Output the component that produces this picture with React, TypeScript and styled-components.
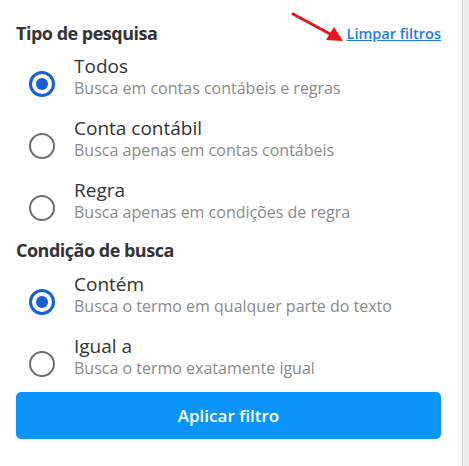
import React, { useState } from "react"
import styled, { createGlobalStyle } from "styled-components"

const GlobalStyle = createGlobalStyle`
  html, body {
    margin: 0;
    padding: 0;
    background: #ffffff;
  }
  body {
    font-family: 'Open Sans', 'Noto Sans', sans-serif;
  }
`

const Page = styled.div`
  display: flex;
  flex-direction: row;
  width: 469px;
  height: 466px;
  overflow: hidden;
  position: relative;
`

const Panel = styled.div`
  flex: 1;
  display: flex;
  flex-direction: column;
  padding: 21px 21px 0 16px;
`

const ScrollTrack = styled.div`
  width: 6px;
  background: #ececec;
  border-left: 1px solid #dcdcdc;
`

const HeaderRow = styled.div`
  display: flex;
  flex-direction: row;
  align-items: center;
  justify-content: space-between;
`

const Heading = styled.h2<{ $spaced?: boolean }>`
  margin: ${(p) => (p.$spaced ? "7px 0 1px 0" : "0")};
  font-size: 18px;
  line-height: 24px;
  font-weight: 700;
  color: #333333;
  letter-spacing: -0.5px;
`

const ClearLink = styled.a`
  font-size: 14.5px;
  font-weight: 600;
  color: #1a7cf0;
  text-decoration: underline;
  cursor: pointer;
`

const Option = styled.label`
  display: flex;
  flex-direction: row;
  align-items: flex-start;
  gap: 19px;
  padding: 9px 0 8px 13px;
  cursor: pointer;
`

const Circle = styled.span<{ $checked: boolean }>`
  box-sizing: border-box;
  flex: none;
  width: 26px;
  height: 26px;
  margin-top: 17px;
  border-radius: 50%;
  border: ${(p) => (p.$checked ? "3px solid #1560d4" : "2px solid #6e6e6e")};
  display: flex;
  align-items: center;
  justify-content: center;

  &::after {
    content: "";
    display: ${(p) => (p.$checked ? "block" : "none")};
    width: 12px;
    height: 12px;
    border-radius: 50%;
    background: #1560d4;
  }
`

const OptionText = styled.span`
  display: flex;
  flex-direction: column;
`

const OptionTitle = styled.span`
  font-size: 19px;
  line-height: 24px;
  color: #333333;
`

const OptionDesc = styled.span`
  font-size: 16px;
  line-height: 21px;
  color: #8a8a8a;
`

const ApplyButton = styled.button`
  margin-top: 5px;
  height: 47px;
  width: 100%;
  border: none;
  border-radius: 5px;
  background: #0b95fb;
  color: #ffffff;
  font-family: inherit;
  font-size: 17px;
  font-weight: 600;
  cursor: pointer;
`

const Arrow = styled.svg`
  position: absolute;
  left: 288px;
  top: 8px;
  pointer-events: none;
`

type Opt = { value: string; title: string; desc: string }

const tipos: Opt[] = [
  { value: "todos", title: "Todos", desc: "Busca em contas contábeis e regras" },
  { value: "conta", title: "Conta contábil", desc: "Busca apenas em contas contábeis" },
  { value: "regra", title: "Regra", desc: "Busca apenas em condições de regra" },
]

const condicoes: Opt[] = [
  { value: "contem", title: "Contém", desc: "Busca o termo em qualquer parte do texto" },
  { value: "igual", title: "Igual a", desc: "Busca o termo exatamente igual" },
]

const RadioGroup: React.FC<{ options: Opt[]; value: string; onChange: (v: string) => void }> = ({
  options,
  value,
  onChange,
}) => (
  <>
    {options.map((o) => (
      <Option key={o.value} onClick={() => onChange(o.value)}>
        <Circle $checked={value === o.value} />
        <OptionText>
          <OptionTitle>{o.title}</OptionTitle>
          <OptionDesc>{o.desc}</OptionDesc>
        </OptionText>
      </Option>
    ))}
  </>
)

export default function App() {
  const [tipo, setTipo] = useState("todos")
  const [cond, setCond] = useState("contem")

  return (
    <Page>
      <GlobalStyle />
      <Panel>
        <HeaderRow>
          <Heading>Tipo de pesquisa</Heading>
          <ClearLink
            onClick={() => {
              setTipo("todos")
              setCond("contem")
            }}
          >
            Limpar filtros
          </ClearLink>
        </HeaderRow>
        <RadioGroup options={tipos} value={tipo} onChange={setTipo} />
        <Heading $spaced>Condição de busca</Heading>
        <RadioGroup options={condicoes} value={cond} onChange={setCond} />
        <ApplyButton type="button">Aplicar filtro</ApplyButton>
      </Panel>
      <ScrollTrack />
      <Arrow width="60" height="40" viewBox="0 0 60 40">
        <line x1="5" y1="6" x2="44" y2="27" stroke="#e8141a" strokeWidth="3" strokeLinecap="round" />
        <polygon points="55,33 38,32 46,19" fill="#e8141a" />
      </Arrow>
    </Page>
  )
}
